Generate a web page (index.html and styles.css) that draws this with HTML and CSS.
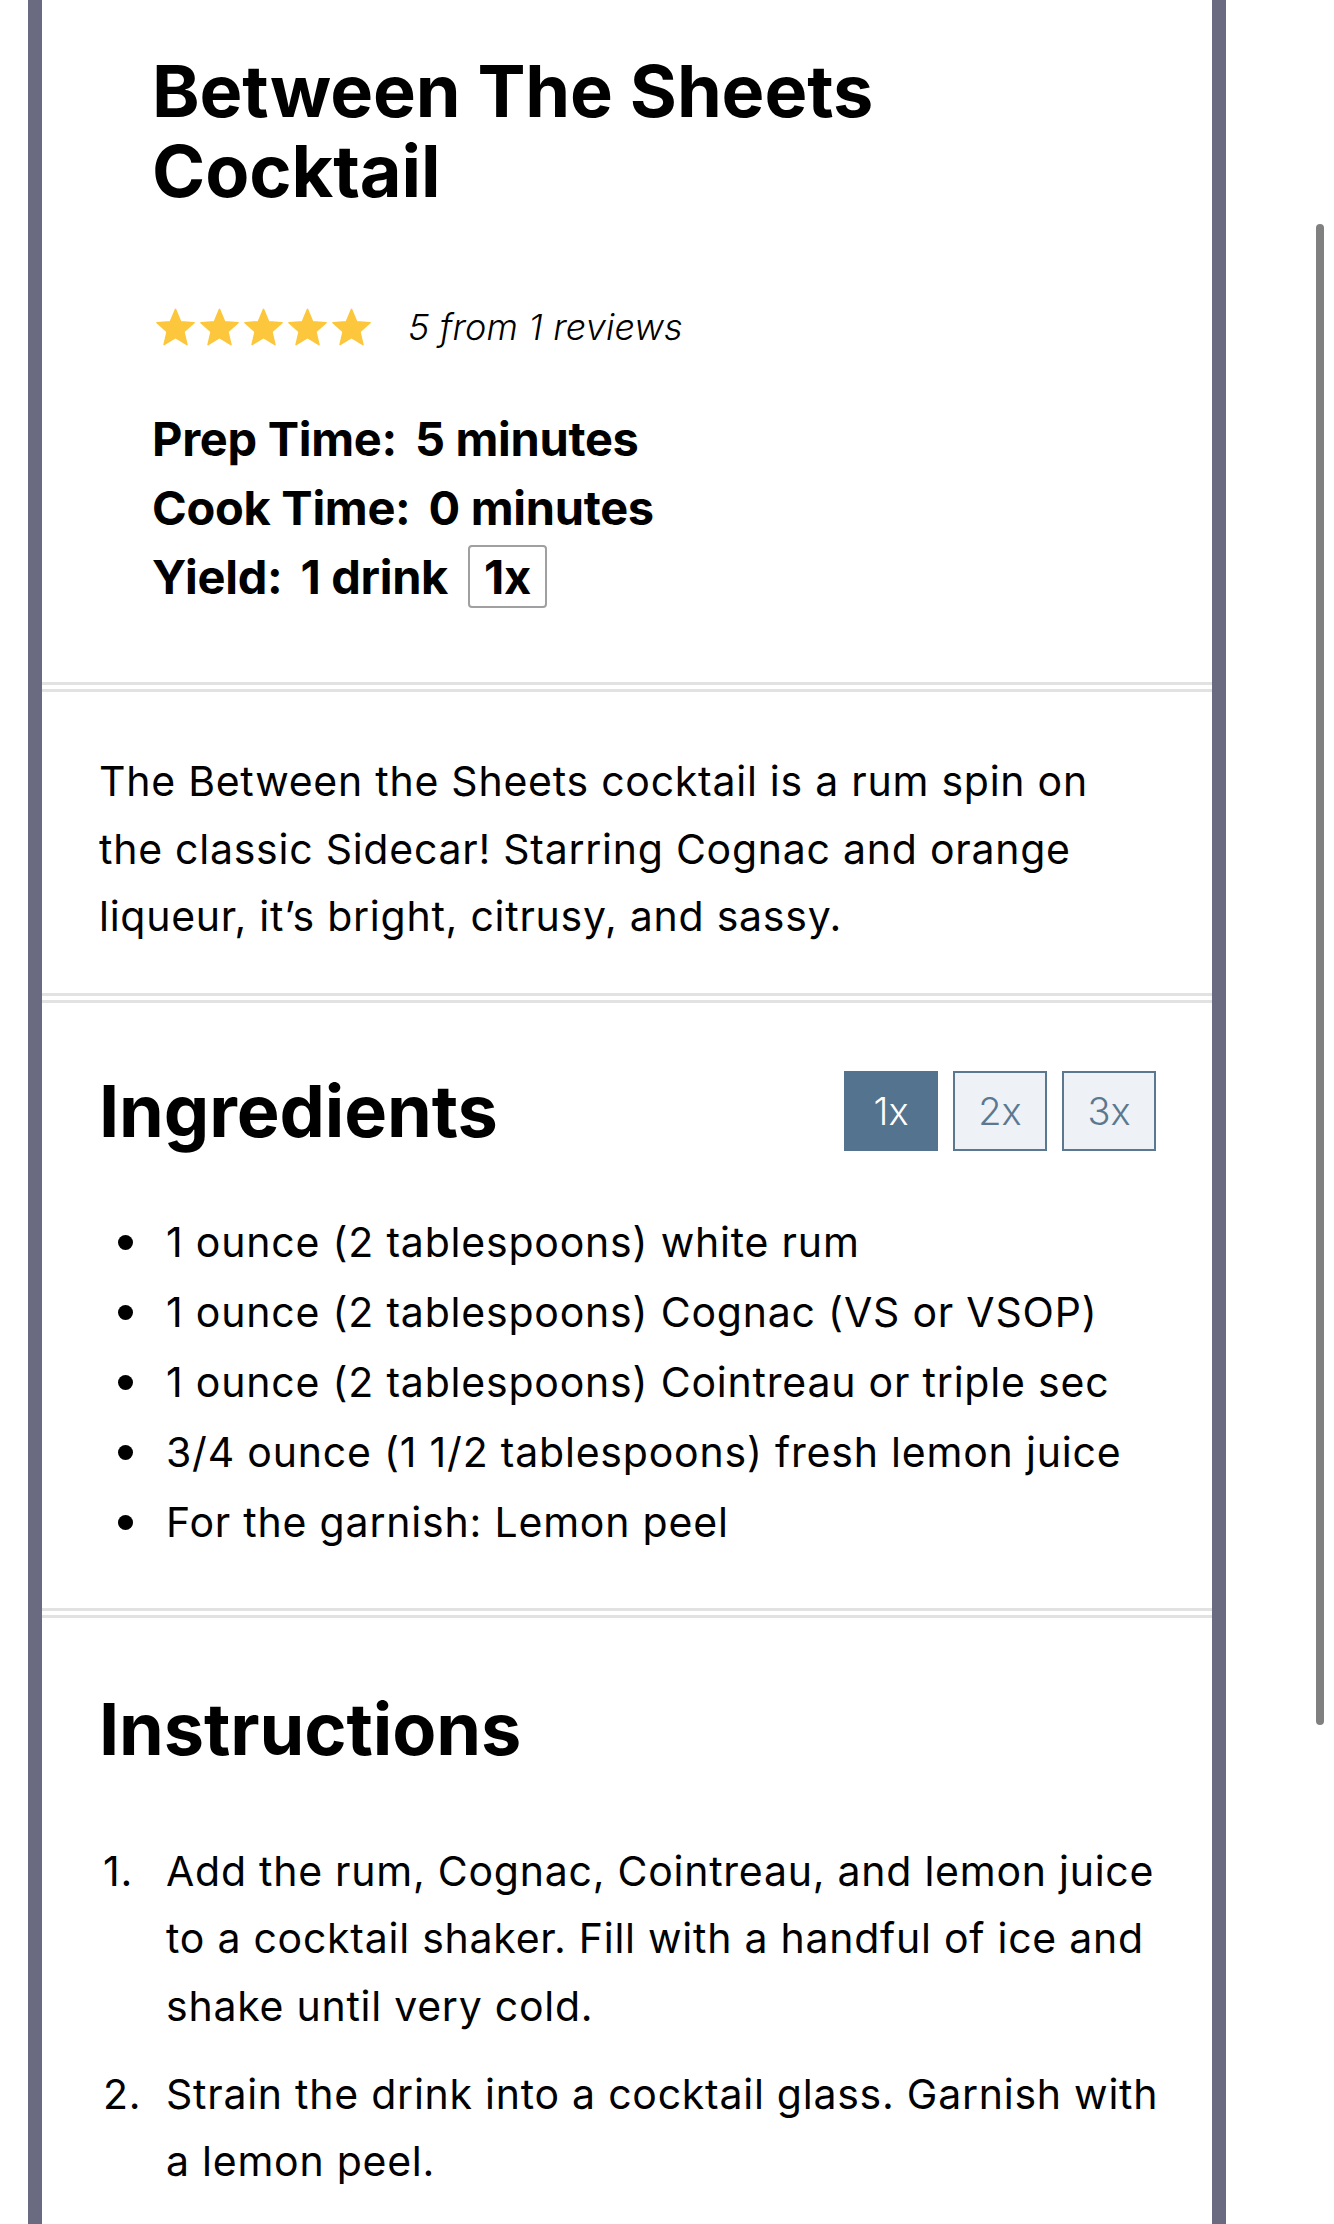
FILE: index.html
```html
<!DOCTYPE html>
<html lang="en">
<head>
<meta charset="utf-8">
<title>Between The Sheets Cocktail</title>
<link rel="stylesheet" href="styles.css">
</head>
<body>
<div class="scrollbar"></div>
<main class="card">
  <section class="sec sec-head">
    <h1 class="title">Between The Sheets Cocktail</h1>
    <div class="rating">
      <div class="stars">
        <svg class="star" viewBox="1.5 1.5 21 20"><path d="M12 17.27L18.18 21l-1.64-7.03L22 9.24l-7.19-.61L12 2 9.19 8.63 2 9.24l5.46 4.73L5.82 21z"/></svg>
        <svg class="star" viewBox="1.5 1.5 21 20"><path d="M12 17.27L18.18 21l-1.64-7.03L22 9.24l-7.19-.61L12 2 9.19 8.63 2 9.24l5.46 4.73L5.82 21z"/></svg>
        <svg class="star" viewBox="1.5 1.5 21 20"><path d="M12 17.27L18.18 21l-1.64-7.03L22 9.24l-7.19-.61L12 2 9.19 8.63 2 9.24l5.46 4.73L5.82 21z"/></svg>
        <svg class="star" viewBox="1.5 1.5 21 20"><path d="M12 17.27L18.18 21l-1.64-7.03L22 9.24l-7.19-.61L12 2 9.19 8.63 2 9.24l5.46 4.73L5.82 21z"/></svg>
        <svg class="star" viewBox="1.5 1.5 21 20"><path d="M12 17.27L18.18 21l-1.64-7.03L22 9.24l-7.19-.61L12 2 9.19 8.63 2 9.24l5.46 4.73L5.82 21z"/></svg>
      </div>
      <span class="rating-text">5 from 1 reviews</span>
    </div>
    <div class="meta">
      <div class="meta-row"><span class="meta-label">Prep Time:</span><span class="meta-val">5 minutes</span></div>
      <div class="meta-row"><span class="meta-label">Cook Time:</span><span class="meta-val">0 minutes</span></div>
      <div class="meta-row"><span class="meta-label">Yield:</span><span class="meta-val">1 drink</span><span class="yield-btn">1x</span></div>
    </div>
  </section>

  <section class="sec sec-desc">
    <p class="desc">The Between the Sheets cocktail is a rum spin on the classic Sidecar! Starring Cognac and orange liqueur, it’s bright, citrusy, and sassy.</p>
  </section>

  <section class="sec sec-ing">
    <div class="ing-head">
      <h2 class="sec-title">Ingredients</h2>
      <div class="mult">
        <button class="mult-btn is-active">1x</button>
        <button class="mult-btn">2x</button>
        <button class="mult-btn">3x</button>
      </div>
    </div>
    <ul class="ing-list">
      <li>1 ounce (2 tablespoons) white rum</li>
      <li>1 ounce (2 tablespoons) Cognac (VS or VSOP)</li>
      <li>1 ounce (2 tablespoons) Cointreau or triple sec</li>
      <li>3/4 ounce (1 1/2 tablespoons) fresh lemon juice</li>
      <li>For the garnish: Lemon peel</li>
    </ul>
  </section>

  <section class="sec sec-inst">
    <h2 class="sec-title">Instructions</h2>
    <ol class="steps">
      <li>Add the rum, Cognac, Cointreau, and lemon juice to a cocktail shaker. Fill with a handful of ice and shake until very cold.</li>
      <li>Strain the drink into a cocktail glass. Garnish with a lemon peel.</li>
    </ol>
  </section>
</main>
</body>
</html>
```

FILE: styles.css
```css
* { box-sizing: border-box; }

html, body {
  margin: 0;
  padding: 0;
  background: #ffffff;
}

body {
  font-family: Inter, "Noto Sans", "Liberation Sans", sans-serif;
  color: #000;
  height: 2224px;
  overflow: hidden;
}

.scrollbar {
  position: fixed;
  top: 224px;
  right: 10px;
  width: 8px;
  height: 1501px;
  border-radius: 4px;
  background: #808080;
}

.card {
  margin-left: 28px;
  width: 1198px;
  min-height: 2224px;
  border-left: 14px solid #6a6a80;
  border-right: 14px solid #6a6a80;
  background: #fff;
}

.sec + .sec {
  border-top: 10px double #e2e2e2;
}

/* header */
.sec-head {
  padding: 51px 110px 71px 110px;
}

.title {
  margin: 0;
  font-size: 72px;
  line-height: 80px;
  font-weight: 700;
  letter-spacing: -0.1px;
}

.rating {
  margin-top: 97px;
  height: 38px;
  display: flex;
  align-items: center;
}

.stars {
  display: flex;
  gap: 5px;
  margin-left: 4px;
}

.star {
  width: 39px;
  height: 38px;
  fill: #fcc73c;
  stroke: #fcc73c;
  stroke-width: 0.8;
  stroke-linejoin: round;
}

.rating-text {
  margin-left: 37px;
  font-size: 36px;
  font-style: italic;
  font-weight: 300;
  line-height: 38px;
  letter-spacing: 0.2px;
}

.meta {
  margin-top: 58px;
}

.meta-row {
  font-size: 47px;
  line-height: 69px;
  font-weight: 700;
  letter-spacing: -0.3px;
  display: flex;
  align-items: center;
}

.meta-label {
  margin-right: 18px;
}

.yield-btn {
  margin-left: 20px;
  border: 2px solid #a0a0a0;
  border-radius: 4px;
  padding: 0 14px;
  height: 63px;
  line-height: 59px;
}

/* description */
.sec-desc {
  padding: 56px 100px 42px 57px;
}

.desc {
  margin: 0;
  font-size: 41px;
  line-height: 67.5px;
  letter-spacing: 0.75px;
}

/* ingredients */
.sec-ing {
  padding: 68px 56px 51px 57px;
}

.ing-head {
  display: flex;
  align-items: center;
  justify-content: space-between;
  height: 80px;
}

.sec-title {
  margin: 0;
  font-size: 72px;
  line-height: 80px;
  font-weight: 700;
  letter-spacing: -0.1px;
}

.mult {
  display: flex;
  gap: 15px;
}

.mult-btn {
  width: 94px;
  height: 80px;
  border: 2px solid #5b7891;
  background: #eef1f5;
  color: #5b7891;
  font-family: Inter, "Noto Sans", sans-serif;
  font-size: 38px;
  font-weight: 300;
  padding: 0;
  border-radius: 0;
}

.mult-btn.is-active {
  background: #54738f;
  border-color: #54738f;
  color: #fff;
}

.ing-list {
  list-style: none;
  margin: 56px 0 0 0;
  padding: 0;
}

.ing-list li {
  position: relative;
  padding-left: 67px;
  font-size: 41px;
  line-height: 70px;
  letter-spacing: 0.8px;
}

.ing-list li::before {
  content: "";
  position: absolute;
  left: 19px;
  top: 28px;
  width: 15px;
  height: 15px;
  border-radius: 50%;
  background: #000;
}

/* instructions */
.sec-inst {
  padding: 71px 52px 40px 57px;
}

.steps {
  list-style: none;
  counter-reset: step;
  margin: 69px 0 0 0;
  padding: 0;
}

.steps li {
  counter-increment: step;
  position: relative;
  padding-left: 67px;
  font-size: 41px;
  line-height: 67.5px;
  letter-spacing: 0.75px;
}

.steps li + li {
  margin-top: 20.5px;
}

.steps li::before {
  content: counter(step) ".";
  position: absolute;
  left: 4px;
  top: 0;
}
```
